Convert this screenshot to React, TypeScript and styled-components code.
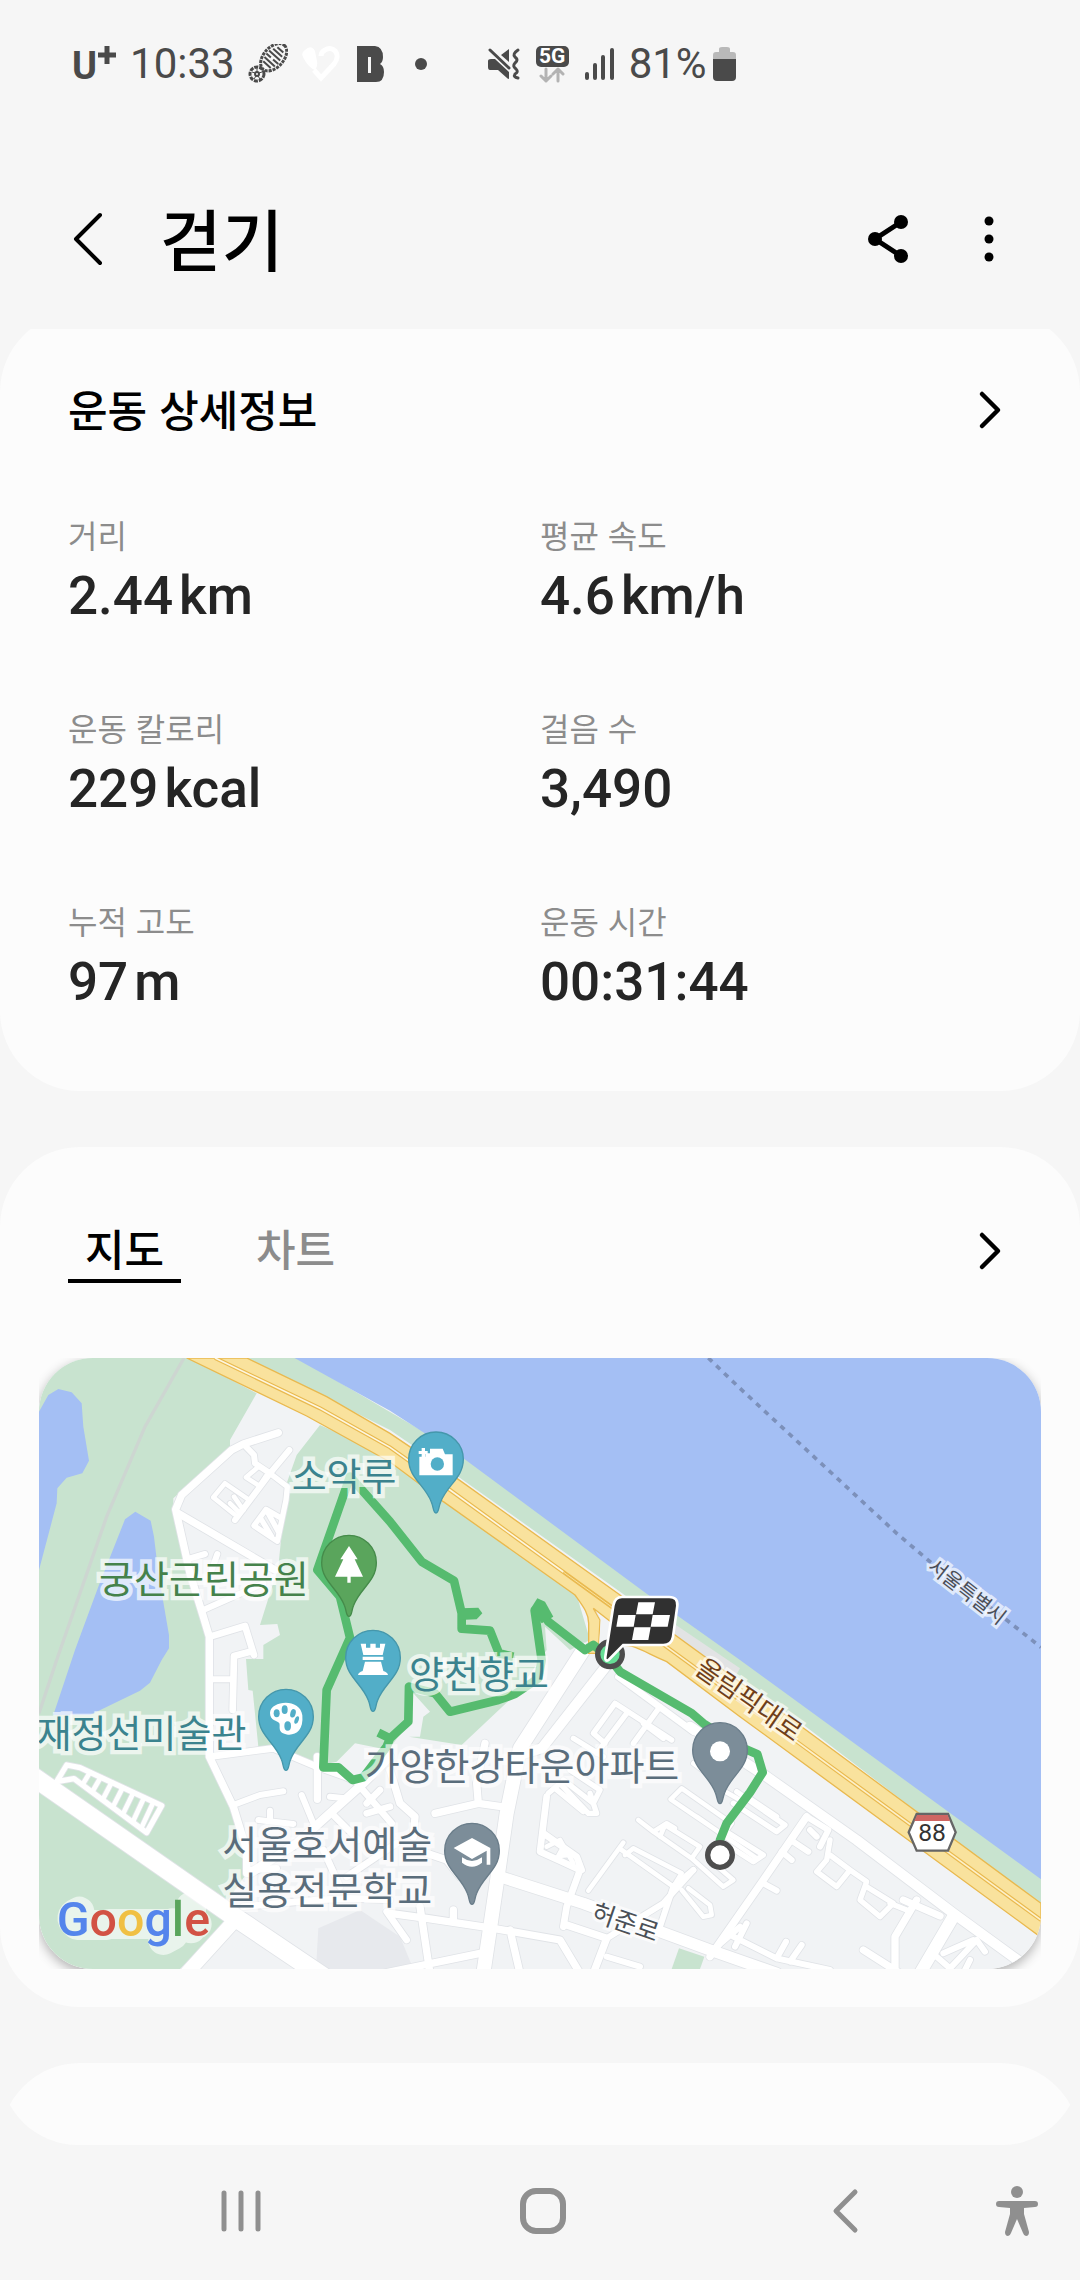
import React from "react";
import styled, { createGlobalStyle } from "styled-components";

const GlobalStyle = createGlobalStyle`
  * { box-sizing: border-box; }
  html, body { margin: 0; padding: 0; background: #f6f6f6; }
  body { font-family: Roboto, "Noto Sans CJK KR", sans-serif; color: #000; }
  button { font: inherit; color: inherit; background: none; border: 0; padding: 0; cursor: pointer; }
  svg { display: block; }
`;

const Screen = styled.div`
  display: flex;
  flex-direction: column;
  height: 100vh;
  background: #f6f6f6;
`;

const StatusBar = styled.div`
  display: flex;
  align-items: center;
  flex: none;
  height: 128px;
  padding: 0 72px;
  color: #4a4a4a;
`;

const StatusGroup = styled.div<{ $gap: number }>`
  display: flex;
  align-items: center;
  gap: ${(p) => p.$gap}px;
  & + & { margin-left: 40px; }
`;

const StatusText = styled.span`
  font-size: 42px;
  line-height: 48px;
`;

const Carrier = styled.span`
  display: flex;
  align-items: flex-start;
  font-size: 38px;
  line-height: 40px;
  font-weight: 700;
  padding-top: 4px;
`;

const TopBar = styled.header`
  display: flex;
  align-items: center;
  flex: none;
  height: 201px;
  padding: 20px 72px 0;
`;

const IconButton = styled.button`
  display: flex;
  align-items: center;
  justify-content: center;
`;

const PageTitle = styled.h1`
  flex: 1;
  margin: 0 0 0 56px;
  padding-bottom: 4px;
  font-family: "Noto Sans CJK KR", sans-serif;
  font-size: 67px;
  line-height: 80px;
  font-weight: 500;
`;

const TopActions = styled.div`
  display: flex;
  gap: 62px;
`;

const Scroller = styled.main`
  display: flex;
  flex-direction: column;
  gap: 56px;
  flex: 1;
  min-height: 0;
  overflow-y: auto;
  scrollbar-width: none;
  border-radius: 0 0 78px 78px;
`;

const Card = styled.section`
  flex: none;
  background: #fcfcfc;
  border-radius: 80px;
`;

const DetailCard = styled(Card)`
  margin-top: -17px;
  padding: 66px 68px 67px;
`;

const MapCard = styled(Card)`
  padding: 72px 39px 38px;
`;

const NextCard = styled(Card)`
  height: 240px;
`;

const SectionRow = styled.div`
  display: flex;
  align-items: center;
  justify-content: space-between;
  padding-right: 8px;
`;

const SectionTitle = styled.h2`
  margin: 0;
  padding-bottom: 4px;
  font-family: "Noto Sans CJK KR", sans-serif;
  font-size: 43px;
  line-height: 60px;
  font-weight: 500;
`;

const Stats = styled.dl`
  display: grid;
  grid-template-columns: 1fr 1fr;
  row-gap: 69px;
  margin: 72px 0 0;
`;

const StatLabel = styled.dt`
  font-family: "Noto Sans CJK KR", sans-serif;
  font-size: 32px;
  line-height: 40px;
  color: #8c8c8c;
`;

const StatValue = styled.dd`
  display: flex;
  gap: 6px;
  margin: 0;
  font-size: 53px;
  line-height: 84px;
  font-weight: 500;
  color: #252525;
`;

const TabRow = styled.div`
  display: flex;
  align-items: center;
  justify-content: space-between;
  padding: 0 37px 0 29px;
`;

const Tabs = styled.div`
  display: flex;
  gap: 58px;
`;

const Tab = styled.button<{ $active: boolean }>`
  width: 113px;
  padding-bottom: 4px;
  font-family: "Noto Sans CJK KR", sans-serif;
  font-size: 43px;
  line-height: 56px;
  font-weight: 500;
  color: ${(p) => (p.$active ? "#000" : "#8c8c8c")};
  border-bottom: 4px solid ${(p) => (p.$active ? "#000" : "transparent")};
`;

const MapFrame = styled.div`
  margin-top: 75px;
  overflow: hidden;
`;

const MapSurface = styled.div`
  overflow: hidden;
  border-radius: 54px;
  box-shadow: 0 4px 12px rgba(0, 0, 0, 0.3);
  svg { width: 100%; height: auto; }
`;

const NavBar = styled.nav`
  display: grid;
  grid-template-columns: 90px 1fr 1fr 1fr 84px;
  flex: none;
  height: 135px;
  padding-bottom: 4px;
  color: #8f8f8f;
  button:first-child { grid-column: 2; }
  button:last-child { justify-content: flex-start; }
`;

const Chevron = () => (
  <svg width="26" height="40" viewBox="0 0 26 40" fill="none" stroke="#000" strokeWidth="4.5" strokeLinecap="round" strokeLinejoin="round">
    <path d="M4 4 20 20 4 36" />
  </svg>
);

const stats = [
  { label: "거리", value: "2.44", unit: "km" },
  { label: "평균 속도", value: "4.6", unit: "km/h" },
  { label: "운동 칼로리", value: "229", unit: "kcal" },
  { label: "걸음 수", value: "3,490" },
  { label: "누적 고도", value: "97", unit: "m" },
  { label: "운동 시간", value: "00:31:44" },
];

/* ---------- Map ---------- */

const roads: [number, string][] = [
  [22, "M745 278 640 312 605 330 455 465 437 508 480 700 520 830 538 890V1250L610 1400 650 1530 650 1600"],
  [18, "M640 312 672 345 675 370 720 400 778 330M720 400 615 540M520 810 700 730M540 1018H605M480 655 525 642M562 642 545 690"],
  [16, "M720 400 772 440 768 480 742 604 672 557 708 508 755 535M712 515 745 575M695 540 725 590"],
  [14, "M680 385 648 412 688 438 708 408M585 430 550 472 612 522M585 430 655 478M612 470 640 510M600 490 625 515"],
  [22, "M445 520 735 690"],
  [20, "M540 890 645 858 672 945M660 935 612 948 608 1110"],
  [56, "M10 1310 620 1735 880 1910"],
  [42, "M620 1735 470 1900"],
  [16, "M80 1325 110 1275 150 1283 395 1397 350 1478 132 1316Z"],
  [14, "M180 1297 160 1330M212 1312 190 1350M245 1327 220 1375M278 1343 250 1398M310 1358 280 1420M342 1373 310 1442M370 1387 335 1462"],
  [20, "M540 1250 730 1225 860 1280 940 1308 990 1330"],
  [22, "M862 1250V1378"],
  [18, "M610 1395 690 1365 760 1354M815 1365 850 1450M685 1440 790 1452M720 1412V1440M900 1370 945 1375"],
  [26, "M1080 1250 1000 1330 800 1510 660 1600"],
  [20, "M905 1420 985 1500M990 1340 1085 1450M1050 1350 1010 1390M1080 1400 1010 1420M880 1530 930 1640M950 1610 1100 1510"],
  [20, "M650 1590 740 1585M640 1700 860 1680 960 1675 1080 1680M1070 1715 1130 1800"],
  [42, "M1660 930 1470 1225 1430 1420 1400 1630 1360 1900"],
  [30, "M1735 970 1535 1225 1470 1245"],
  [22, "M1215 1420 1345 1390 1430 1402M1345 1390 1340 1330 1365 1210M1080 1290 1110 1390 1155 1430 1150 1490M1190 1540 1250 1560 1290 1610"],
  [34, "M1410 1610 1660 1690 2040 1830 2240 1900"],
  [20, "M1550 1370 1530 1535 1585 1560 1650 1590 1610 1700 1600 1760M1540 1480 1640 1550 1655 1590"],
  [14, "M1550 1520 1590 1500 1630 1570M1595 1530 1620 1545 1585 1548Z"],
  [16, "M1555 1360 1590 1330 1675 1420 1700 1420 1680 1360M1600 1320 1690 1390 1710 1350 1620 1290M1575 1345 1660 1415"],
  [22, "M1080 1720 1190 1735 1390 1765 1590 1800 1650 1900M1170 1700 1200 1900M1060 1900 1350 1840M1440 1770 1470 1900M1270 1710V1740M1610 1755 1730 1795 1690 1900"],
  [18, "M1730 1850 1830 1880M1730 1795 1900 1690 1990 1590"],
  [20, "M1765 1010 1990 1175"],
  [16, "M1755 1090 1925 1200M1755 1090 1690 1180 1725 1210M1890 1100 1810 1210M1790 1120 1700 1240M1630 1195 1720 1250M1840 1150 1900 1195"],
  [14, "M1955 1345 1922 1378 2080 1485 2105 1450ZM1990 1270 2030 1300M2060 1340 2130 1380M2000 1430 2180 1555"],
  [14, "M1825 1440 1870 1475 1910 1450 1935 1465M1890 1490 1905 1455 2010 1520 1985 1555 1870 1475M1985 1555 2080 1640 2110 1620 2040 1560"],
  [14, "M1780 1508 1675 1652M1775 1530 1930 1640 1955 1600 1810 1525 1785 1545M1955 1650 2020 1730 2045 1725 2040 1695 1975 1645"],
  [18, "M1990 1590 1930 1640 1890 1760"],
  [30, "M1980 1160 2210 1310 2480 1500 2770 1720 2990 1880"],
  [22, "M2330 1430 2200 1620 2040 1850"],
  [16, "M2120 1355 2265 1455 2240 1475 2110 1390M2080 1470 2200 1545 2170 1565 2100 1520M2150 1370 2240 1430"],
  [18, "M2330 1430 2395 1470 2370 1520M2290 1505 2335 1535M2255 1535 2285 1560M2200 1630 2240 1652M2340 1470 2360 1490"],
  [16, "M2400 1500 2390 1560 2360 1595 2420 1640 2460 1590 2400 1545M2460 1590 2510 1625 2490 1680 2550 1730 2590 1690 2510 1640M2580 1690 2630 1710"],
  [22, "M2660 1680 2595 1790V1890M2500 1830 2610 1900M2620 1680 2730 1728"],
  [36, "M2770 1730 2670 1900"],
  [18, "M2720 1850 2760 1885 2840 1800 2865 1835M2740 1840 2830 1800M2800 1900 2820 1860"],
  [18, "M2110 1790 2240 1855 2400 1890M2240 1855 2268 1805M2280 1865 2315 1815M2115 1820 2150 1750M2060 1820 2130 1760"],
];

const Pin = ({ x, y, fill, edge, children }: { x: number; y: number; fill: string; edge: string; children: React.ReactNode }) => (
  <g transform={`translate(${x} ${y})`}>
    <path
      d="M0 161C-9 161-7 144-14 128C-32 78-82 56-82 0A82 82 0 1 1 82 0C82 56 32 78 14 128C7 144 9 161 0 161Z"
      fill={fill}
      stroke={edge}
      strokeWidth="4"
    />
    {children}
  </g>
);

const Label = styled.text<{ $size?: number; $tone: string }>`
  font-family: "Noto Sans CJK KR", sans-serif;
  font-size: ${(p) => p.$size ?? 114}px;
  fill: ${(p) => p.$tone};
  stroke: rgba(255, 255, 255, 0.66);
  stroke-width: ${(p) => (p.$size ? 18 : 26)}px;
  paint-order: stroke;
`;

const GoogleMark = styled.text`
  font-family: Roboto, sans-serif;
  font-size: 145px;
  font-weight: 500;
`;

const ShieldText = styled.text`
  font-family: Roboto, sans-serif;
  font-size: 74px;
  fill: #333;
`;

const SLATE = "#5a6d7b";
const TEAL = "#3b838e";

const RouteMap = () => (
  <svg viewBox="27 54 3006 1833" role="img" aria-label="지도">
    <rect x="27" y="54" width="3006" height="1833" fill="#f1f3f5" />
    <g fill="#c8e3cf">
      <path d="M27 54H480L680 160 600 300V325L430 475V520L470 700 530 860V1250L610 1430 645 1500 650 1600 580 1700 590 1745 450 1887H27Z" />
      <path d="M870 255 1080 350 1240 480 1640 765 1680 900 1620 930 1545 860 1550 930 1460 1060 1295 1215 1137 1190 1170 1190 1180 1130 1200 1115 1150 1060 1120 1170 1075 1230 975 1210 920 1265 850 1280 730 1215 685 1220 668 1052 655 1050 648 957H700V915L750 885 742 852 690 855 745 680 770 430 800 345Z" />
      <path d="M620 40 1080 270 1285 410 1770 755 2325 1158 3033 1700V1610L2130 952 1300 345 780 40Z" />
      <path d="M1947 1825 2023 1850 2010 1887H1925Z" />
    </g>
    <path d="M865 1765 990 1710 1110 1790 1150 1887H858Z" fill="#e7e9ed" />
    <path d="M1930 850 2130 985 2110 1020 1890 880Z" fill="#e2e3e4" />
    <g fill="#a4bff4">
      <path d="M790 52 1080 212 1300 355 1855 765 2130 960 3033 1618V52Z" />
      <path d="M27 215 55 165 85 147 125 157 155 190 160 260 177 362 157 400 110 413 82 445 80 490 27 690Z" />
      <path d="M316 515 362 542 372 590 385 700 417 885V925L395 960 360 1028 330 1052 180 1125H70L135 930 205 740 285 538Z" />
    </g>
    <path d="M462 54 345 260 230 530 80 960 27 1120" fill="none" stroke="#cdd6d1" strokeWidth="10" />

    <g fill="none" strokeLinecap="round" strokeLinejoin="round">
      {roads.map(([w, d]) => (
        <path key={d} d={d} stroke="#e0e3e7" strokeWidth={w + 5} />
      ))}
      {roads.map(([w, d]) => (
        <path key={d} d={d} stroke="#fff" strokeWidth={w} />
      ))}
    </g>

    <g stroke="#e9b94f" strokeWidth="4" fill="#f9e29d">
      <path d="M470 54 830 228 1080 366 1240 485 1635 765C1660 800 1676 820 1676 850V940H1705L1710 840 1690 805 1800 890 1760 920C1800 905 1830 930 1910 965L2130 1130 3033 1792V1690L2325 1168 1770 765 1285 418 1080 280 890 170 650 54Z" />
      <path d="M1690 805 1712 840 1706 930 1760 910Z" fill="#f1f3f5" stroke="none" />
      <path d="M555 54 870 205 1080 322 1260 450 1748 803 2310 1212 3033 1740" fill="none" strokeWidth="12" />
      <path d="M555 54 870 205 1080 322 1260 450 1600 696" fill="none" stroke="#fdf6df" strokeWidth="5" />
      <path d="M1600 696 1748 803" fill="none" stroke="#f9e29d" strokeWidth="3" />
      <path d="M1748 803 2310 1212 3033 1740" fill="none" stroke="#fdf0c8" strokeWidth="5" />
    </g>

    <path d="M2035 54 2130 145 2600 580 2700 665 2930 840 3033 922" fill="none" stroke="#7c90ba" strokeWidth="11" strokeDasharray="16 17" />

    <path
      d="M2070 1545V1500L2090 1450 2160 1357 2198 1297 2182 1243 2130 1220 2020 1150 1985 1120 1770 995 1735 950 1690 915 1665 930 1555 845 1525 800 1514 812 1535 960 1525 1015 1455 1062 1405 1080 1260 1115 1215 1060 1137 1040 1135 1145 1080 1195 1045 1178M1080 1195 1070 1220 1000 1312 968 1320 925 1282 880 1282 890 1050 960 893 930 770 862 690 960 410 1080 545 1175 665 1272 722 1295 820V866L1380 872 1407 940 1450 950"
      fill="none"
      stroke="#56bb6f"
      strokeWidth="26"
      strokeLinejoin="round"
    />
    <path d="M1502 806 1522 775 1545 785 1570 830 1535 850Z" fill="#56bb6f" />
    <path d="M1290 805 1345 803 1357 820 1340 838 1290 840Z" fill="#56bb6f" />

    <Label x="785" y="450" $tone={TEAL}>소악루</Label>
    <Label x="207" y="758" $tone="#45824b">궁산근린공원</Label>
    <Label x="1137" y="1043" $tone={TEAL}>양천향교</Label>
    <Label x="20" y="1220" $tone={TEAL}>재정선미술관</Label>
    <Label x="1004" y="1319" $tone={SLATE}>가양한강타운아파트</Label>
    <Label $tone={SLATE}>
      <tspan x="577" y="1553">서울호서예술</tspan>
      <tspan x="577" y="1692">실용전문학교</tspan>
    </Label>
    <Label $size={75} $tone="#4b5056" textAnchor="middle" transform="translate(1778 1772) rotate(19)">허준로</Label>
    <Label $size={80} $tone="#6f3f1a" textAnchor="middle" transform="translate(2141 1102) rotate(35)">올림픽대로</Label>
    <Label $size={60} $tone="#4b4f58" textAnchor="middle" transform="translate(2798 772) rotate(38)">서울특별시</Label>

    <Pin x={1218} y={358} fill="#52aec8" edge="#4597ab">
      <path d="M-50-8H-32V-18H-18V-32H20L27-15H50V48H-50ZM-52-25H-43V-34H-33V-25H-25V-16H-33V-8H-43V-16H-52Z" fill="#fff" />
      <circle cx="4" cy="14" r="20" fill="#52aec8" />
    </Pin>
    <Pin x={957} y={668} fill="#5aa55c" edge="#458b4a">
      <path d="M0-50 26-10H17L42 42H5V60H-5V42H-42L-17-10H-26Z" fill="#fff" />
    </Pin>
    <Pin x={1029} y={953} fill="#52aec8" edge="#4597ab">
      <path d="M-37-42H-21V-30H-8V-42H8V-30H21V-42H37L29-8H-29ZM-31-3H31V7H-31ZM-24 12H24L31 40Q44 44 45 52H-45Q-44 44-31 40Z" fill="#fff" />
    </Pin>
    <Pin x={768} y={1130} fill="#52aec8" edge="#4597ab">
      <path d="M-48-12C-46-48 42-58 49-4C53 40 30 56 6 54C-28 50-16 30-20 20C-26 10-48 14-48-12Z" fill="#fff" />
      <g fill="#52aec8">
        <ellipse cx="-28" cy="-10" rx="9" ry="12" />
        <ellipse cx="-4" cy="-21" rx="9" ry="13" />
        <ellipse cx="21" cy="-10" rx="8" ry="13" transform="rotate(15 21 -10)" />
        <ellipse cx="32" cy="10" rx="6" ry="12" transform="rotate(20 32 10)" />
        <ellipse cx="5" cy="28" rx="10" ry="14" />
      </g>
    </Pin>
    <Pin x={2070} y={1230} fill="#7c8d99" edge="#6a7d8a">
      <circle cy="4" r="30" fill="#fff" />
    </Pin>
    <Pin x={1326} y={1532} fill="#7c8d99" edge="#6a7d8a">
      <path d="M0-38 55-8V42H44V0L0 25-55-8ZM-30 20Q0 42 30 20V36Q0 60-30 36Z" fill="#fff" />
    </Pin>

    <circle cx="2070" cy="1545" r="37" fill="#fff" stroke="#4d4d4d" strokeWidth="16" />
    <circle cx="1740" cy="943" r="37" fill="#66de95" stroke="#4d4d4d" strokeWidth="16" />
    <path
      d="M1776 775H1918Q1940 775 1938 797L1925 890Q1921 911 1900 911H1778L1735 955Q1728 962 1730 950L1754 797Q1758 775 1776 775Z"
      fill="#303030"
      stroke="#fff"
      strokeWidth="16"
      strokeLinejoin="round"
      paintOrder="stroke"
    />
    <path d="M1825 787H1875L1868 823H1818ZM1765 825H1817L1811 860H1759ZM1868 825H1920L1913 860H1862ZM1813 862H1862L1855 900H1806Z" fill="#fff" />

    <path d="M2660 1422H2754L2777 1477 2754 1532H2660L2636 1477Z" fill="#fff" stroke="#666" strokeWidth="7" />
    <path d="M2661 1425H2753L2760 1443H2653Z" fill="#cf6663" />
    <ShieldText x="2706" y="1503" textAnchor="middle">88</ShieldText>

    <path
      d="M148 1715Q110 1730 142 1755H230M238 1752H500M428 1750V1785L400 1800M483 1700V1765"
      fill="none"
      stroke="#fff"
      strokeOpacity="0.6"
      strokeWidth="90"
      strokeLinecap="round"
      strokeLinejoin="round"
    />
    <GoogleMark x="80" y="1789">
      <tspan fill="#5485ec">G</tspan>
      <tspan fill="#d25244">o</tspan>
      <tspan fill="#f0c043">o</tspan>
      <tspan fill="#5485ec">g</tspan>
      <tspan fill="#5aa55c">l</tspan>
      <tspan fill="#d25244">e</tspan>
    </GoogleMark>
  </svg>
);

/* ---------- Status icons ---------- */

const Footprint = () => (
  <svg width="40" height="40" viewBox="0 0 40 40" fill="none" stroke="#4a4a4a">
    <g transform="rotate(-48 25 14)">
      <ellipse cx="26" cy="14" rx="16" ry="10" strokeWidth="3" strokeDasharray="3 1" />
      <path d="M16 9v10M20 7v14M24 6v6M24 15v7M28 6v15M32 8v12M36 10v8" strokeWidth="2" />
    </g>
    <circle cx="9" cy="30" r="7" strokeWidth="3" strokeDasharray="4 1" />
    <circle cx="9" cy="30" r="2" strokeWidth="2" />
    <path d="M9 24v4M4 28l3 1M14 28l-3 1M6 35l2-3M12 35l-2-3" strokeWidth="1" />
  </svg>
);

const HeartShoe = () => (
  <svg width="40" height="40" viewBox="0 0 40 40">
    <path d="M4 6Q10 0 14 7L16 17Q17 22 14 26Q8 24 3 15Q-1 9 4 6Z" fill="#fff" />
    <path d="M13 26 20 34 33 20C41 10 32 1 24 6Q20 8 20 12" fill="none" stroke="#fff" strokeWidth="5" />
  </svg>
);

const BlockLogo = () => (
  <svg width="30" height="38" viewBox="2 0 30 38">
    <path fillRule="evenodd" fill="#4a4a4a" d="M5 1H23Q31 2 31 12Q31 17 28 19Q32 21 32 27Q32 37 24 37H5ZM16 12V28H19V12Z" />
  </svg>
);

const MuteIcon = () => (
  <svg width="34" height="34" viewBox="0 0 34 34" fill="#4a4a4a">
    <path d="M1 14Q1 12 4 12H8L22 25V31Q22 33 20 31L11 23H3Q1 23 1 20ZM14 8 22 2V15Z" />
    <path d="M3 3 22 21" stroke="#4a4a4a" strokeWidth="3" strokeLinecap="round" />
    <path d="M31 3Q25 7 28 10Q32 13 28 16Q25 19 29 22Q32 25 28 27Q26 30 31 31" fill="none" stroke="#4a4a4a" strokeWidth="3" strokeLinecap="round" />
  </svg>
);

const Network = styled.span`
  display: flex;
  flex-direction: column;
  align-items: center;
  width: 33px;
`;

const NetworkBadge = styled.span`
  width: 33px;
  border-radius: 5px;
  background: #4a4a4a;
  color: #fff;
  font-size: 21px;
  line-height: 21px;
  font-weight: 700;
  text-align: center;
`;

const App = () => (
  <>
    <GlobalStyle />
    <Screen lang="ko">
      <StatusBar>
        <StatusGroup $gap={13}>
          <Carrier>
            U
            <svg width="20" height="20" viewBox="0 0 20 20">
              <path d="M10 0v18M1 9h18" stroke="#4a4a4a" strokeWidth="5" />
            </svg>
          </Carrier>
          <StatusText>10:33</StatusText>
          <Footprint />
          <HeartShoe />
          <BlockLogo />
          <svg width="50" height="12" viewBox="0 0 50 12">
            <circle cx="24" cy="6" r="6" fill="#4a4a4a" />
          </svg>
        </StatusGroup>
        <StatusGroup $gap={15}>
          <MuteIcon />
          <Network>
            <NetworkBadge>5G</NetworkBadge>
            <svg width="26" height="16" viewBox="0 0 26 16" fill="none" stroke="#b3b3b3" strokeWidth="3" strokeLinecap="round" strokeLinejoin="round">
              <path d="M7 2v12M2 9l5 5 5-5M19 14V2M14 7l5-5 5 5" />
            </svg>
          </Network>
          <svg width="30" height="34" viewBox="0 0 30 34" stroke="#4a4a4a" strokeWidth="4" strokeLinecap="round">
            <path d="M3 27v4M11 18v13M19 10v21M28 3v28" />
          </svg>
          <StatusText>81%</StatusText>
        </StatusGroup>
        <svg width="30" height="36" viewBox="0 0 30 36">
          <path d="M6 9Q6 6 9 6H12V3Q12 1 15 1H20Q23 1 23 3V6H26Q29 6 29 9V14H6Z" fill="#b9b9b9" />
          <path d="M6 13H29V31Q29 35 25 35H10Q6 35 6 31Z" fill="#4a4a4a" />
        </svg>
      </StatusBar>

      <TopBar>
        <IconButton type="button" aria-label="뒤로">
          <svg width="32" height="54" viewBox="0 0 32 54" fill="none" stroke="#000" strokeWidth="4" strokeLinecap="round" strokeLinejoin="round">
            <path d="M28 3 4 27 28 51" />
          </svg>
        </IconButton>
        <PageTitle>걷기</PageTitle>
        <TopActions>
          <IconButton type="button" aria-label="공유">
            <svg width="40" height="48" viewBox="0 0 40 48">
              <path d="M33 7 7 24 33 41" fill="none" stroke="#000" strokeWidth="5" />
              <circle cx="7" cy="24" r="7" />
              <circle cx="33" cy="7" r="7" />
              <circle cx="33" cy="41" r="7" />
            </svg>
          </IconButton>
          <IconButton type="button" aria-label="더보기">
            <svg width="38" height="48" viewBox="0 0 38 48">
              <circle cx="19" cy="6" r="4.5" />
              <circle cx="19" cy="24" r="4.5" />
              <circle cx="19" cy="42" r="4.5" />
            </svg>
          </IconButton>
        </TopActions>
      </TopBar>

      <Scroller>
        <DetailCard>
          <SectionRow>
            <SectionTitle>운동 상세정보</SectionTitle>
            <IconButton type="button" aria-label="운동 상세정보 열기">
              <Chevron />
            </IconButton>
          </SectionRow>
          <Stats>
            {stats.map((s) => (
              <div key={s.label}>
                <StatLabel>{s.label}</StatLabel>
                <StatValue>
                  <span>{s.value}</span>
                  {s.unit && <span>{s.unit}</span>}
                </StatValue>
              </div>
            ))}
          </Stats>
        </DetailCard>

        <MapCard>
          <TabRow>
            <Tabs role="tablist">
              <Tab type="button" role="tab" aria-selected="true" $active>지도</Tab>
              <Tab type="button" role="tab" aria-selected="false" $active={false}>차트</Tab>
            </Tabs>
            <IconButton type="button" aria-label="지도 열기">
              <Chevron />
            </IconButton>
          </TabRow>
          <MapFrame>
            <MapSurface>
              <RouteMap />
            </MapSurface>
          </MapFrame>
        </MapCard>

        <NextCard />
      </Scroller>

      <NavBar>
        <IconButton type="button" aria-label="최근 앱">
          <svg width="42" height="44" viewBox="0 0 42 44" stroke="currentColor" strokeWidth="5" strokeLinecap="round">
            <path d="M4 4v36M21 4v36M38 4v36" />
          </svg>
        </IconButton>
        <IconButton type="button" aria-label="홈">
          <svg width="46" height="46" viewBox="0 0 46 46" fill="none" stroke="currentColor" strokeWidth="6">
            <rect x="3" y="3" width="40" height="40" rx="13" />
          </svg>
        </IconButton>
        <IconButton type="button" aria-label="이전">
          <svg width="28" height="46" viewBox="0 0 28 46" fill="none" stroke="currentColor" strokeWidth="5" strokeLinecap="round" strokeLinejoin="round">
            <path d="M24 4 5 23 24 42" />
          </svg>
        </IconButton>
        <IconButton type="button" aria-label="접근성">
          <svg width="42" height="50" viewBox="0 0 42 50" fill="currentColor">
            <circle cx="21" cy="6" r="6" />
            <path d="M3 15H39Q42 15 42 18Q42 21 39 21L28 22V28L33 46Q33 50 30 50Q28 50 27 47L21 33 15 47Q14 50 12 50Q9 50 9 46L14 28V22L3 21Q0 21 0 18Q0 15 3 15Z" />
          </svg>
        </IconButton>
      </NavBar>
    </Screen>
  </>
);

export default App;
